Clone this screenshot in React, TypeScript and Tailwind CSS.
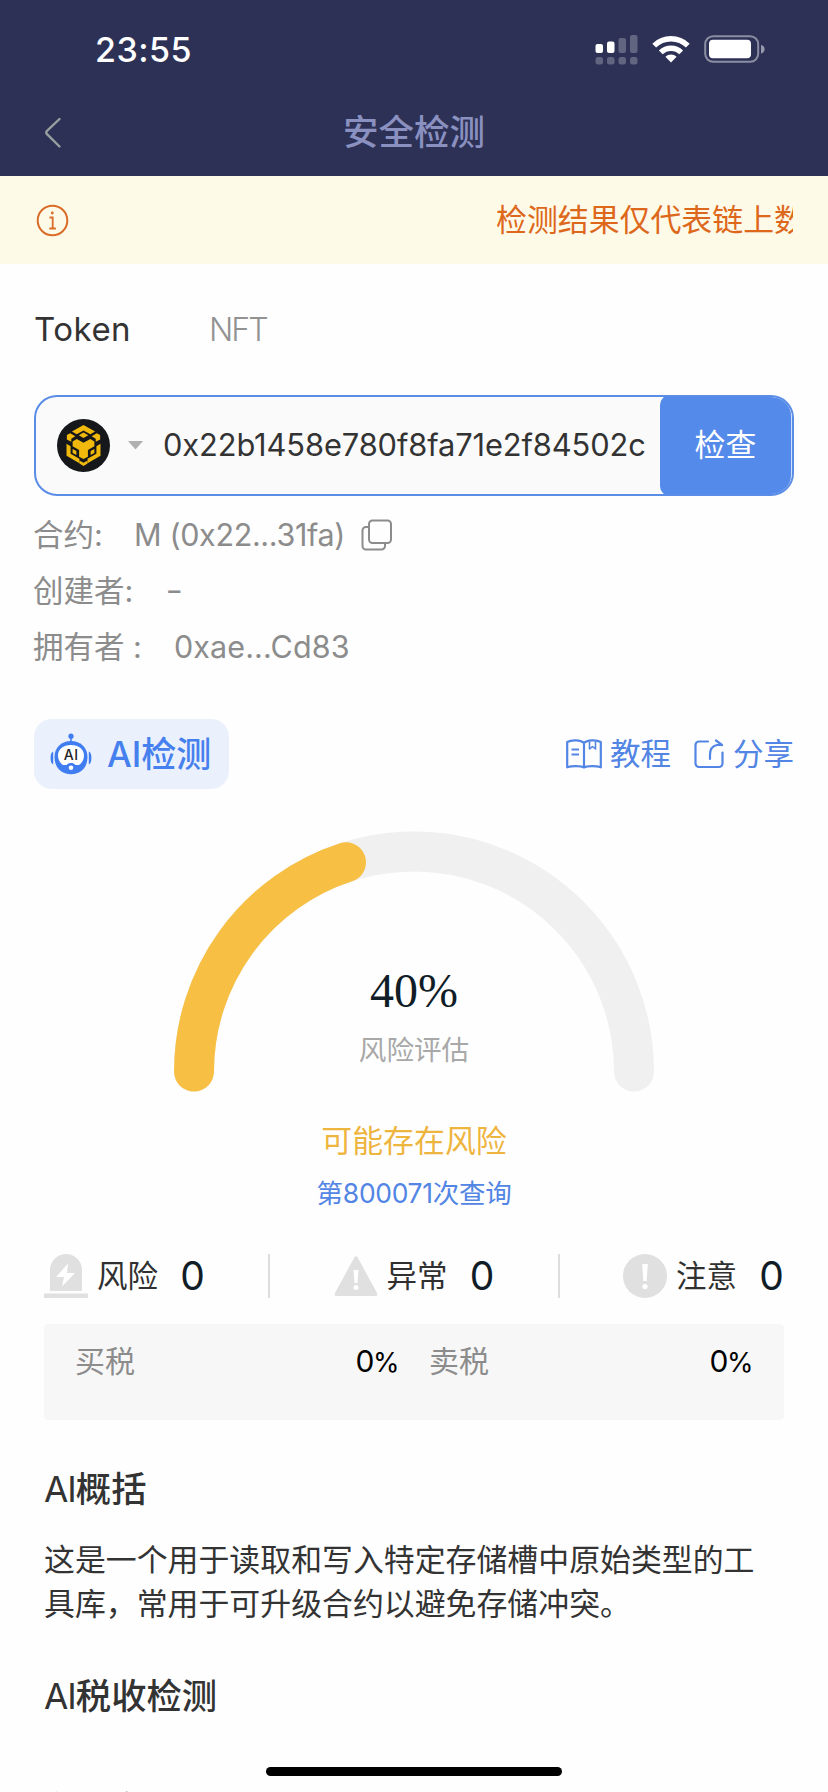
import React from "react";

const GRAY = "#e0e0e0";

function Signal() {
  return (
    <svg width="44" height="32" viewBox="0 0 44 32" fill="#fff">
      <rect x="0.5" y="10" width="7.5" height="9" rx="2" />
      <rect x="12" y="7.5" width="7.5" height="11.5" rx="2" />
      <g opacity="0.25">
        <rect x="23.5" y="4" width="7.5" height="15" rx="2" />
        <rect x="35" y="1" width="7.5" height="18" rx="2" />
        <rect x="0.5" y="23" width="7.5" height="7.5" rx="2.5" />
        <rect x="12" y="23" width="7.5" height="7.5" rx="2.5" />
        <rect x="23.5" y="23" width="7.5" height="7.5" rx="2.5" />
        <rect x="35" y="23" width="7.5" height="7.5" rx="2.5" />
      </g>
    </svg>
  );
}

function Wifi() {
  return (
    <svg width="38" height="28" viewBox="0 0 38 28" fill="none" stroke="#fff" strokeWidth="5.4">
      <path d="M2.2 10.6a24 24 0 0 1 33.6 0" />
      <path d="M8.8 17.4a14.6 14.6 0 0 1 20.4 0" />
      <path d="M19 27.5l-5.6-5.8a8 8 0 0 1 11.2 0z" fill="#fff" stroke="none" />
    </svg>
  );
}

function Battery() {
  return (
    <svg width="62" height="28" viewBox="0 0 62 28">
      <rect x="1.2" y="1.2" width="53" height="25.6" rx="8" fill="none" stroke="#fff" strokeOpacity="0.45" strokeWidth="2" />
      <rect x="5" y="4.8" width="42" height="18.4" rx="4" fill="#fff" />
      <path d="M57 10v8.4c2.4-.6 3.6-2.2 3.6-4.2S59.400 10.600 57 10z" fill="#fff" fillOpacity="0.5" />
    </svg>
  );
}

function ChainLogo() {
  return (
    <svg width="53" height="53" viewBox="0 0 156 156" className="shrink-0">
      <circle cx="78" cy="78" r="78" fill="#15171a" />
      <g fill="#f2b90d">
        <path d="M78 18l34 19-14 8-20-11-20 11-14-8z" />
        <path d="M78 40l14 8-14 8-14-8z" />
        <path d="M29 47l10-5 15 9-12 7v9l-13-7z" />
        <path d="M127 47l-10-5-15 9 12 7v9l13-7z" />
        <path d="M28 73l12 7v22l26 15v13l-38-22z" />
        <path d="M128 73l-12 7v22l-26 15v13l38-22z" />
        <path d="M46 66l12-7 20 11 20-11 12 7v14l-19 11v20l-13 7-13-7V91L46 80z" />
        <path d="M46 88l11 6v12l-11-6z" />
        <path d="M110 88l-11 6v12l11-6z" />
        <path d="M66 122l12 7 12-7v9l-12 7-12-7z" />
      </g>
    </svg>
  );
}

function CopyIcon() {
  return (
    <svg width="32" height="32" viewBox="0 0 32 32" fill="none" stroke="#8c8c8c" strokeWidth="2" className="shrink-0">
      <rect x="8" y="1.500" width="22" height="22.500" rx="3.500" />
      <path d="M7.500 8H5a3.500 3.500 0 0 0-3.500 3.500V27A3.500 3.500 0 0 0 5 30.500h15.500A3.500 3.500 0 0 0 24 27v-2.500" />
    </svg>
  );
}

function Robot() {
  return (
    <svg width="42" height="42" viewBox="0 0 42 42">
      <circle cx="21" cy="3.200" r="2.600" fill="#3f7df0" />
      <path d="M21 4v5" stroke="#3f7df0" strokeWidth="1.600" />
      <path d="M21 8C11.500 8 4.500 14.500 4.500 24c0 10 6 17.200 16.500 17.200S37.500 34 37.500 24C37.500 14.500 30.500 8 21 8z" fill="#3f7df0" />
      <path d="M3.200 18.500C1 19.500.600 22 .600 25s.6 5.500 2.600 6.500zM38.800 18.500c2.200 1 2.600 3.500 2.600 6.500s-.6 5.500-2.600 6.500z" fill="#3f7df0" />
      <path d="M21 12C13 12 8 16.500 8 22.500c0 4 2 7.500 5 9.500h3.500c1.500-1.500 2.500-2 4.500-2s3 .5 4.500 2H29c3-2 5-5.500 5-9.500C34 16.500 29 12 21 12z" fill="#fff" />
      <circle cx="21" cy="34.800" r="2.300" fill="#fff" />
      <text x="21.300" y="27.200" textAnchor="middle" fontFamily="Inter" fontWeight="500" fontSize="14" letterSpacing="0.600" fill="#222">AI</text>
    </svg>
  );
}

function Book() {
  return (
    <svg width="36" height="30" viewBox="0 0 36 30" fill="none" stroke="#5285e4" strokeWidth="2.200" strokeLinejoin="round">
      <path d="M18 4C15 .8 5.500.500 1.200 3v25.300c4.300-1.500 13.800-1.500 16.800.200 3-1.700 12.500-1.700 16.800-.200V3C30.500.500 21 .8 18 4z" />
      <path d="M18 4.500v24M5.500 10.500h7.500M5.500 15.500h7.500" />
      <path d="M23.500 2.500V10l3-2.500 3 2.500V2.500" strokeWidth="1.600" />
    </svg>
  );
}

function Share() {
  return (
    <svg width="30" height="30" viewBox="0 0 30 30" fill="none" stroke="#5285e4" strokeWidth="2.200" strokeLinecap="round" strokeLinejoin="round">
      <path d="M14 2.500H5a3.500 3.500 0 0 0-3.500 3.500v18.500A3.500 3.500 0 0 0 5 28h20a3.500 3.500 0 0 0 3.500-3.500V13.500" />
      <path d="M16 20v-4.500c0-5 2.500-8.500 7-9.500h5M22 1.500L28 6" />
    </svg>
  );
}

function Siren() {
  return (
    <svg width="44" height="44" viewBox="0 0 44 44" fill={GRAY}>
      <path d="M6 37V16a16 16 0 0 1 32 0v21z" />
      <rect y="39.500" width="44" height="4.500" />
      <path d="M24 9.500L12 23h8l-2 9.500L31 19h-8z" fill="#fff" />
    </svg>
  );
}

function Triangle() {
  return (
    <svg width="44" height="44" viewBox="0 0 44 44" fill={GRAY}>
      <path d="M20.500 3.200q1.500-2 3 0L43 39q1 3-1.500 3h-39Q0 42 1 39z" />
      <path d="M19.500 16h5l-1 13h-3z" fill="#fff" />
      <circle cx="22" cy="33.500" r="2.500" fill="#fff" />
    </svg>
  );
}

function Notice() {
  return (
    <svg width="44" height="44" viewBox="0 0 44 44" fill={GRAY}>
      <circle cx="22" cy="22" r="22" />
      <path d="M19.200 10h5.600l-1.200 17h-3.200z" fill="#fff" />
      <circle cx="22" cy="32.500" r="2.600" fill="#fff" />
    </svg>
  );
}

function Stat({ icon, label }: { icon: React.ReactNode; label: string }) {
  return (
    <div className="flex h-[44px] items-center">
      {icon}
      <span className="ml-[9px] w-[61px] text-[30.5px] text-[#303030]">{label}</span>
      <span className="ml-[22px] w-[25px] text-center text-[39px] text-[#101c26]">0</span>
    </div>
  );
}

function Gauge() {
  return (
    <div className="relative mx-auto h-[261px] w-[480px]">
      <svg width="480" height="261" viewBox="0 0 480 261" fill="none" strokeWidth="40" strokeLinecap="round">
        <path d="M20 240.500a220 220 0 0 1 440 0" stroke="#f0f0f0" />
        <path d="M20 240.500A220 220 0 0 1 172 31.300" stroke="#f7c045" />
      </svg>
      <div className="absolute inset-x-0 top-[132px] flex flex-col items-center">
        <div className="h-[56px] font-['Liberation_Serif'] text-[48px] leading-[56px] text-[#101c26]">40%</div>
        <div className="mt-[11px] h-[40px] text-[27.6px] leading-[40px] text-[#a8a8a8]">风险评估</div>
      </div>
    </div>
  );
}

function Tax({ label }: { label: string }) {
  return (
    <div className="flex w-[323px] justify-between">
      <span className="text-[#8c8c8c]">{label}</span>
      <span className="text-[30px] tracking-[-1.500px] text-black">0<span className="text-[27px]">%</span></span>
    </div>
  );
}

export default function App() {
  return (
    <div className="relative flex h-[1792px] w-[828px] flex-col overflow-hidden bg-[#fefefe] font-[Inter,'Noto_Sans_CJK_SC',sans-serif] text-[#333]">
      <header className="h-[176px] shrink-0 bg-[#2d3156]">
        <div className="flex h-[88px] items-start pt-[34px]">
          <div className="ml-[95px] text-[34px] leading-[32px] font-medium tracking-[0.500px] text-white">23:55</div>
          <div className="mr-[62px] ml-auto flex items-center">
            <Signal />
            <div className="ml-[13px] -translate-y-px"><Wifi /></div>
            <div className="ml-[14px] -translate-y-px"><Battery /></div>
          </div>
        </div>
        <div className="grid h-[90px] grid-cols-3 items-center">
          <svg className="ml-[44px]" width="18" height="32" viewBox="0 0 18 32" fill="none" stroke="#97a09f" strokeWidth="2.400" strokeLinecap="round" strokeLinejoin="round">
            <path d="M15.500 2L3 13.800q-1.500 1.700 0 3.400l12.500 12.300" />
          </svg>
          <h1 className="text-center text-[35.500px] font-medium text-[#8a90c0]">安全检测</h1>
        </div>
      </header>

      <div className="flex h-[88px] shrink-0 items-center bg-[#fefae8] pr-[35px] pl-[36px]">
        <svg width="33" height="33" viewBox="0 0 33 33" fill="none" stroke="#d96c28" strokeWidth="2">
          <circle cx="16.500" cy="16.500" r="14.800" />
          <path d="M13.500 13.500h3.200v10.800M13.300 24.500h6.600" strokeWidth="1.800" />
          <circle cx="16.300" cy="9" r="1.400" fill="#d96c28" stroke="none" />
        </svg>
        <div className="ml-auto w-[297px] overflow-hidden text-[30.900px] leading-[44px] whitespace-nowrap text-[#dd681c]">检测结果仅代表链上数据</div>
      </div>

      <nav className="flex h-[131px] shrink-0 items-center pl-[34px]">
        <span className="w-[175px] text-[33px] tracking-[0.500px] text-[#333]">Token</span>
        <span className="text-[32px] font-light tracking-[-2px] text-[#929292]">NFT</span>
      </nav>

      <main className="flex flex-col">
        <div className="mx-[34px] flex h-[101px] items-center overflow-hidden rounded-[23px] border-2 border-[#5b8de6] bg-[#fafafa]">
          <div className="ml-[21px] flex"><ChainLogo /></div>
          <svg className="ml-[18px] shrink-0" width="15" height="9" viewBox="0 0 15 9" fill="#b0b0b0"><path d="M0 0h15L7.500 8.500z" /></svg>
          <div className="ml-[20px] grow text-[30.800px] tracking-[-0.100px] whitespace-nowrap text-[#333]">0x22b1458e780f8fa71e2f84502c</div>
          <div className="-my-px flex h-[101px] w-[132px] shrink-0 items-center justify-center rounded-l-[10px] rounded-r-[21px] border-r border-[#cfe0ff] bg-[#548aea] text-[30.900px] text-white">检查</div>
        </div>

        <div className="mt-[11px] flex flex-col pl-[33px] text-[30.500px] text-[#8c8c8c]">
          <div className="flex h-[56px] items-center">
            <span className="w-[101px]">合约:</span>
            <span className="mr-[16px] w-[211px] tracking-[-0.350px] whitespace-nowrap">M (0x22...31fa)</span>
            <CopyIcon />
          </div>
          <div className="flex h-[56px] items-center"><span className="w-[132px]">创建者:</span><span className="-translate-y-px scale-x-125 pl-[2px]">-</span></div>
          <div className="flex h-[56px] items-center"><span className="w-[141px]">拥有者 :</span><span className="tracking-[0.100px]">0xae...Cd83</span></div>
        </div>

        <div className="mt-[44px] flex h-[70px] items-center pr-[34px] pl-[34px]">
          <div className="flex h-[70px] w-[195px] items-center rounded-[18px] bg-[#ebf1fc] pl-[16px]">
            <Robot />
            <span className="ml-[15px] text-[35px] font-medium whitespace-nowrap text-[#4580ee]">AI检测</span>
          </div>
          <div className="ml-auto flex items-center text-[30.500px] text-[#5285e4]">
            <Book />
            <span className="ml-[8px]">教程</span>
            <div className="ml-[23px]"><Share /></div>
            <span className="ml-[9px]">分享</span>
          </div>
        </div>

        <div className="mt-[42px]"><Gauge /></div>

        <div className="mt-[26px] text-center text-[30.900px] leading-[46px] text-[#eeb53e]">可能存在风险</div>
        <div className="mt-[9px] text-center text-[26.500px] leading-[40px] tracking-[-0.300px] text-[#5285e4]">第800071次查询</div>

        <div className="mt-[41px] flex items-center justify-between px-[44px]">
          <Stat icon={<Siren />} label="风险" />
          <div className="h-[44px] w-[2px] bg-[#dedede]" />
          <Stat icon={<Triangle />} label="异常" />
          <div className="h-[44px] w-[2px] bg-[#dedede]" />
          <Stat icon={<Notice />} label="注意" />
        </div>

        <div className="mx-[44px] mt-[26px] flex h-[96px] gap-[31px] rounded-[4px] bg-[#f7f7f7] pt-[14px] pl-[31px] text-[30px] leading-[46px]">
          <Tax label="买税" />
          <Tax label="卖税" />
        </div>

        <section className="px-[44px]">
          <h2 className="mt-[44px] text-[35.300px] leading-[52px] font-medium"><span className="font-normal tracking-[-1px]">AI</span>概括</h2>
          <p className="mt-[22px] w-[725px] text-[30.900px] leading-[44px]">这是一个用于读取和写入特定存储槽中原始类型的工具库，常用于可升级合约以避免存储冲突。</p>
          <h2 className="mt-[45px] text-[35.300px] leading-[52px] font-medium"><span className="font-normal tracking-[-1px]">AI</span>税收检测</h2>
        </section>
        <div className="mt-[61px] pl-[34px] text-[35.300px] leading-[52px] font-medium">流动检测</div>
      </main>

      <div className="absolute top-[1767px] left-[266px] h-[9px] w-[296px] rounded-full bg-black" />
    </div>
  );
}
